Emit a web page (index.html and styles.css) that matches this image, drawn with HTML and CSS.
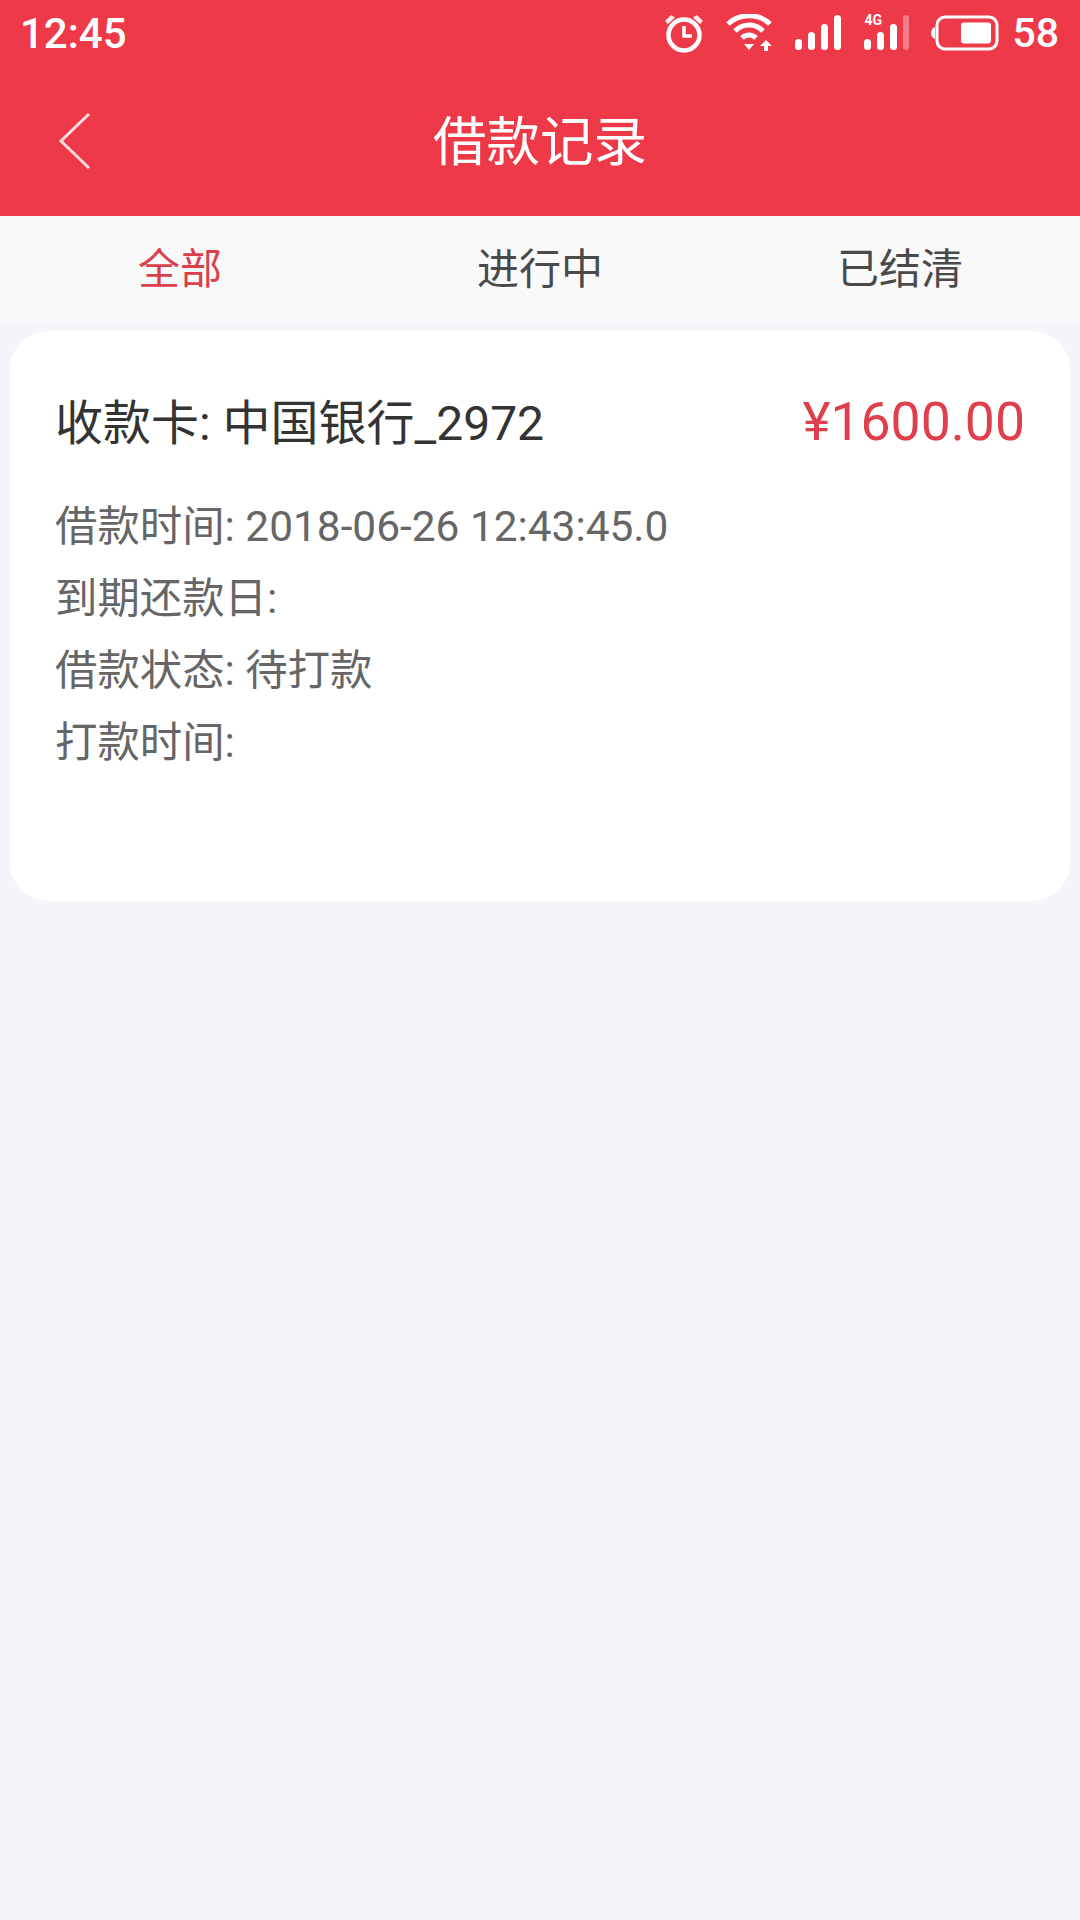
FILE: index.html
```html
<!DOCTYPE html>
<html lang="zh-CN">
<head>
    <meta charset="UTF-8">
    <meta name="viewport" content="width=device-width, initial-scale=1.0">
    <title>借款记录</title>
    <link rel="stylesheet" href="styles.css">
</head>
<body>

    <header class="top">
        <div class="status-bar">
            <span class="clock">12:45</span>
            <div class="status-icons">
                <svg class="icon-alarm" width="42" height="42" viewBox="0 0 42 42">
                    <circle cx="21" cy="23" r="15.500" fill="none" stroke="#fff" stroke-width="4.500"/>
                    <path d="M21 14v10h8" fill="none" stroke="#fff" stroke-width="3.600"/>
                    <path d="M2 9 8 3 12 5.500 5 12Z M40 9 34 3 30 5.500 37 12Z" fill="#fff" opacity="0.9"/>
                </svg>
                <svg class="icon-wifi" width="48" height="38" viewBox="0 0 48 38">
                    <path d="M2 10C13-1 33-1 44 10" fill="none" stroke="#fff" stroke-width="5"/>
                    <path d="M9 17C17 9 29 9 37 17" fill="none" stroke="#fff" stroke-width="5"/>
                    <path d="M16 24C20 20 26 20 30 24" fill="none" stroke="#fff" stroke-width="5"/>
                    <path d="M18 30H28L23 36Z" fill="#fff"/>
                    <path d="M40 26 46 32H42V37H38V32H34Z" fill="#fff"/>
                </svg>
                <svg class="icon-signal" width="46" height="36" viewBox="0 0 46 36">
                    <rect x="0" y="24" width="7" height="11" rx="3.500" fill="#fff"/>
                    <rect x="13" y="17" width="7" height="18" rx="3.500" fill="#fff"/>
                    <rect x="26" y="9" width="7" height="26" rx="3.500" fill="#fff"/>
                    <rect x="39" y="0" width="7" height="35" rx="3.500" fill="#fff"/>
                </svg>
                <div class="signal-4g">
                    <span class="tag-4g">4G</span>
                    <svg width="46" height="36" viewBox="0 0 46 36">
                        <rect x="0" y="24" width="7" height="11" rx="3.500" fill="#fff"/>
                        <rect x="13" y="17" width="7" height="18" rx="3.500" fill="#fff"/>
                        <rect x="26" y="9" width="7" height="26" rx="3.500" fill="#fff"/>
                        <rect x="39" y="0" width="6" height="35" rx="3" fill="#fff" opacity="0.35"/>
                    </svg>
                </div>
                <svg class="icon-battery" width="68" height="36" viewBox="0 0 68 36">
                    <rect x="6" y="2" width="60" height="32" rx="8" fill="none" stroke="#fff" stroke-width="3"/>
                    <rect x="30" y="7.500" width="30" height="21" rx="3" fill="#fff"/>
                    <path d="M4 12V24C1 23 0 20 0 18S1 13 4 12Z" fill="#fff"/>
                </svg>
                <span class="battery-num">58</span>
            </div>
        </div>
        <div class="nav-bar">
            <svg class="back" width="34" height="58" viewBox="0 0 34 58">
                <path d="M31 2 3 29 31 56" fill="none" stroke="#fbdadd" stroke-width="3"/>
            </svg>
            <h1 class="nav-title">借款记录</h1>
        </div>
    </header>

    <nav class="tabs">
        <a class="tab active">全部</a>
        <a class="tab">进行中</a>
        <a class="tab">已结清</a>
    </nav>

    <section class="card">
        <div class="card-head">
            <span class="card-name">收款卡: 中国银行_2972</span>
            <span class="card-amount">¥1600.00</span>
        </div>
        <p class="card-row">借款时间: 2018-06-26 12:43:45.0</p>
        <p class="card-row">到期还款日:</p>
        <p class="card-row">借款状态: 待打款</p>
        <p class="card-row">打款时间:</p>
    </section>

</body>
</html>
```

FILE: styles.css
```css
* {
    box-sizing: border-box;
}

body {
    font-family: Roboto, "Noto Sans CJK SC", sans-serif;
    background-color: #f3f5fa;
    margin: 0;
    width: 1080px;
    height: 1920px;
    overflow: hidden;
}

.top {
    background-color: #ee3a48;
    color: white;
    height: 216px;
}

.status-bar {
    height: 66px;
    display: flex;
    justify-content: space-between;
    align-items: center;
    padding: 0 21px 0 20px;
}

.clock {
    font-size: 42px;
    font-weight: 500;
}

.status-icons {
    display: flex;
    align-items: center;
    gap: 21px;
}

.signal-4g {
    position: relative;
    display: flex;
    margin-left: 2px;
}

.tag-4g {
    position: absolute;
    left: 0;
    top: -2px;
    font-size: 14px;
    font-weight: 700;
    line-height: 14px;
}

.battery-num {
    font-size: 41px;
    font-weight: 500;
    margin-left: -8px;
}

.nav-bar {
    position: relative;
    height: 150px;
    display: flex;
    align-items: center;
    justify-content: center;
    padding-bottom: 8px;
}

.back {
    position: absolute;
    left: 58px;
    top: 46px;
}

.nav-title {
    margin: 0;
    font-size: 53.500px;
    font-weight: 400;
}

.tabs {
    height: 106px;
    background-color: #f9f9fa;
    display: grid;
    grid-template-columns: 360px 360px 360px;
    align-items: center;
    text-align: center;
    font-size: 42px;
    color: #4a4a4a;
    padding-bottom: 8px;
}

.tab.active {
    color: #d9404c;
}

.card {
    margin: 9px 10px 0;
    height: 570px;
    background-color: white;
    border-radius: 38px;
    padding: 53px 45px 0;
}

.card-head {
    display: flex;
    justify-content: space-between;
    align-items: baseline;
    height: 62px;
    margin-bottom: 45px;
}

.card-name {
    font-size: 48px;
    color: #333;
}

.card-amount {
    font-size: 53.500px;
    color: #df3f4d;
}

.card-row {
    margin: 0;
    height: 72px;
    line-height: 72px;
    font-size: 42.400px;
    color: #666;
}
```
